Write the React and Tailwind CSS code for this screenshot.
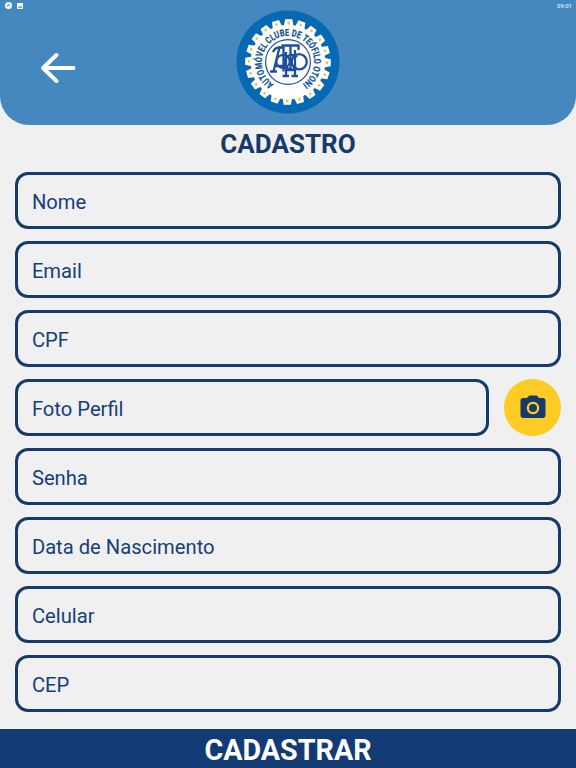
import React from "react";
import { MdCameraAlt } from "react-icons/md";

const topFields = ["Nome", "Email", "CPF"];
const bottomFields = ["Senha", "Data de Nascimento", "Celular", "CEP"];

const TEETH = 20;

const Field = ({ label }) => (
  <label className="flex items-center flex-1 h-[57px] shrink-0 border-3 border-[#163a6c] rounded-[13px] px-[14.4px] pt-[3px] text-[20.2px] text-[#163f7a]">
    {label}
  </label>
);

const ClubLogo = () => {
  const angles = Array.from({ length: TEETH }, (_, i) => (i * 360) / TEETH + 1);

  return (
    <svg viewBox="-52 -52 104 104" className="w-[104px] h-[104px]">
      <circle r="51.5" fill="#0669b4" />
      {/* Gear */}
      <circle r="37.3" fill="#fff" />
      {angles.map((angle) => (
        <g key={angle} transform={`rotate(${angle})`}>
          <path d="M-4.8 -36 L-3.6 -42.8 H3.6 L4.8 -36 Z" fill="#fff" />
          <circle cy="-39" r="1.4" fill="#f2c24a" />
        </g>
      ))}
      {/* Club name */}
      <path
        id="club-name"
        d="M-14 22.2 A26.2 26.2 0 1 1 14 22.2"
        fill="none"
      />
      <text
        fill="#0f5296"
        stroke="#0f5296"
        strokeWidth="0.2"
        fontSize="9.6"
        fontWeight="700"
      >
        <textPath
          href="#club-name"
          textLength="134"
          lengthAdjust="spacingAndGlyphs"
        >
          AUTOMÓVEL CLUBE DE TEÓFILO OTONI
        </textPath>
      </text>
      {/* Monogram */}
      <g fill="none" stroke="#1f4f9a" strokeWidth="2.3">
        <circle r="22.4" strokeWidth="1.2" />
        <path d="M-14.5 9.5 L-8.5 -14.5 H-4.5 V9.5 M-18 9.5 H-11 M-14 4 H-4" />
        <path d="M-15 -10 Q-13 -15 -7 -14.5" />
        <circle cx="-5" cy="-0.5" r="6.6" strokeWidth="2" />
        <path d="M9 -5 A7.4 7.4 0 1 0 9 5.5" />
        <circle cx="11.2" cy="-0.3" r="7.6" />
        <path d="M-6.5 -16.5 H10.5 V-12 M2.5 -16.5 V8 M-2 -10 V14 M7 -12 V14 M-5.5 14 H1 M3.5 14 H10 M-2 8 H7" />
      </g>
    </svg>
  );
};

const App = () => {
  return (
    <div className="flex flex-col h-screen overflow-hidden bg-[#f0f0f0] font-[Roboto,sans-serif]">
      <header className="relative flex justify-center h-[125px] shrink-0 bg-[#4488bf] rounded-b-[29px]">
        <div className="absolute top-[2px] left-[5px] flex items-center gap-[4px]">
          <svg viewBox="0 0 8 8" className="w-[7px] h-[7px]">
            <circle cx="4" cy="4" r="4" fill="#fff" />
            <path
              d="M2.3 5.5 L4 2.3 L5.7 5.5"
              fill="none"
              stroke="#4488bf"
              strokeWidth="1"
            />
          </svg>
          <svg viewBox="0 0 8 8" className="w-[6px] h-[6px] ml-px">
            <rect width="8" height="8" rx="1" fill="#fff" />
            <path d="M1.2 6.3 L3 4 L4.1 5.2 L5.5 3.5 L7 6.3 Z" fill="#4488bf" />
          </svg>
        </div>
        <span className="absolute top-[2px] right-[4px] text-[6px] leading-[7px] text-white">
          09:01
        </span>
        <button className="absolute left-[40px] top-[52px]">
          <svg viewBox="0 0 36 32" className="w-[36px] h-[32px]">
            <path
              d="M16.5 3 L3 16 L16.5 29 M3.5 16 H33.5"
              fill="none"
              stroke="#fff"
              strokeWidth="4"
              strokeLinecap="round"
              strokeLinejoin="round"
            />
          </svg>
        </button>
        <div className="mt-[10px]">
          <ClubLogo />
        </div>
      </header>

      <h1 className="h-[47px] shrink-0 pt-[4px] text-center text-[26px] leading-[31px] font-bold text-[#163a6c]">
        CADASTRO
      </h1>

      <main className="flex flex-col flex-1 gap-[12px] pl-[14.5px] pr-[15px]">
        {topFields.map((label) => (
          <div key={label} className="flex">
            <Field label={label} />
          </div>
        ))}
        <div className="flex items-center gap-[15px]">
          <Field label="Foto Perfil" />
          <button className="flex items-center justify-center w-[57px] h-[57px] rounded-full bg-[#ffcb25]">
            <MdCameraAlt className="w-[30px] h-[30px] text-[#163a6c]" />
          </button>
        </div>
        {bottomFields.map((label) => (
          <div key={label} className="flex">
            <Field label={label} />
          </div>
        ))}
      </main>

      <button className="h-[39px] shrink-0 pt-[3px] bg-[#123b73] text-white text-[28.7px] leading-[36px] font-bold">
        CADASTRAR
      </button>
    </div>
  );
};

export default App;
